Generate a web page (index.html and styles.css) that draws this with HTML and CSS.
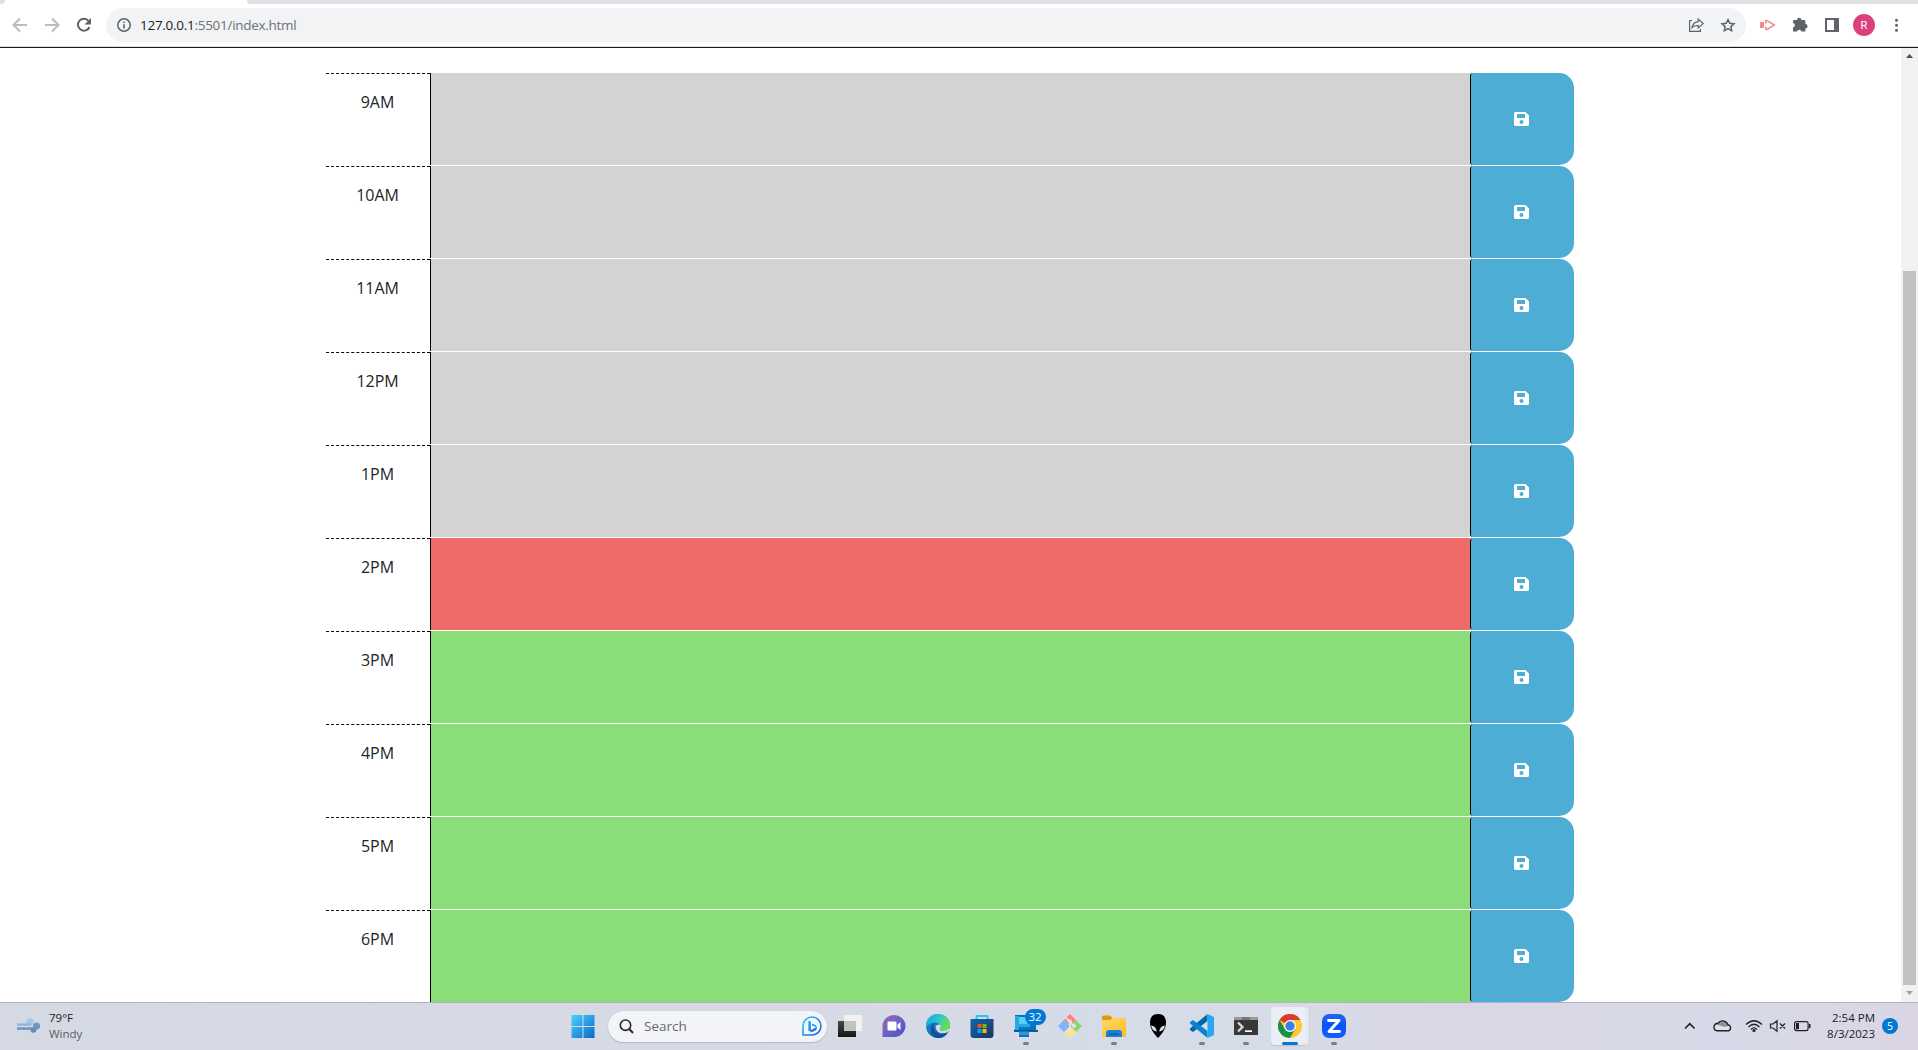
FILE: index.html
```html
<!DOCTYPE html>
<html lang="en">
<head>
<meta charset="utf-8">
<title>Work Day Scheduler</title>
<link rel="stylesheet" href="styles.css">
</head>
<body>
<svg width="0" height="0" class="defs" aria-hidden="true">
  <defs>
    <symbol id="save" viewBox="0 0 15 14"><path fill="#fff" fill-rule="evenodd" d="M1.5 0H11.5L15 3.5V12.5Q15 14 13.5 14H1.5Q0 14 0 12.5V1.500Q0 0 1.500 0ZM3 2V6H11V2ZM7.500 8A2 2 0 1 0 7.500 12A2 2 0 1 0 7.500 8Z"/></symbol>
    <linearGradient id="gWin" x1="0" y1="0" x2="1" y2="1"><stop offset="0" stop-color="#4fd0ff"/><stop offset="1" stop-color="#0669cb"/></linearGradient>
    <linearGradient id="gBing" x1="0" y1="0" x2="1" y2="1"><stop offset="0" stop-color="#2bc3f0"/><stop offset="1" stop-color="#2456d6"/></linearGradient>
    <linearGradient id="gDark" x1="0" y1="0" x2="0" y2="1"><stop offset="0" stop-color="#484846"/><stop offset="1" stop-color="#161616"/></linearGradient>
    <linearGradient id="gChat" x1="0" y1="0" x2="1" y2="1"><stop offset="0" stop-color="#a464ac"/><stop offset=".5" stop-color="#6b62c6"/><stop offset="1" stop-color="#4c50c8"/></linearGradient>
    <linearGradient id="gEdge" x1="0" y1="0" x2="1" y2=".5"><stop offset="0" stop-color="#159fd9"/><stop offset=".5" stop-color="#2cc3d1"/><stop offset="1" stop-color="#68e04f"/></linearGradient>
    <linearGradient id="gEdge2" x1="0" y1="0" x2="1" y2="1"><stop offset="0" stop-color="#1a96dc"/><stop offset="1" stop-color="#0c4f9c"/></linearGradient>
    <linearGradient id="gStore" x1="0" y1="0" x2="1" y2="1"><stop offset="0" stop-color="#0d68b4"/><stop offset="1" stop-color="#22325c"/></linearGradient>
    <linearGradient id="gFolder" x1="0" y1="0" x2="1" y2="1"><stop offset="0" stop-color="#ffda65"/><stop offset="1" stop-color="#fabb2b"/></linearGradient>
    <linearGradient id="gZoom" x1="0" y1="0" x2="0" y2="1"><stop offset="0" stop-color="#2366f2"/><stop offset=".5" stop-color="#0754ff"/><stop offset="1" stop-color="#1262fa"/></linearGradient>
    <linearGradient id="gWind" x1="0" y1="0" x2="0" y2="1"><stop offset="0" stop-color="#b5d1ef"/><stop offset="1" stop-color="#527fae"/></linearGradient>
  </defs>
</svg>
<header class="browser">
  <div class="tabstrip"><span class="tab-prev"></span><span class="tab-rest"></span></div>
  <div class="toolbar">
    <svg class="nav" viewBox="0 0 106 34" fill="none" stroke-width="2">
      <path stroke="#babcbe" d="M27 17H14M20 10.500 13.500 17 20 23.500M45 17H58M52 10.500 58.500 17 52 23.500"/>
      <path stroke="#5f6368" d="M88.700 13A6 6 0 1 0 89.500 19"/><path fill="#5f6368" d="M91 10V16.500H84.500Z"/>
    </svg>
    <div class="address">
      <svg class="info" viewBox="0 0 14 14"><circle cx="7" cy="7" r="6.200" fill="none" stroke="#5f6368" stroke-width="1.500"/><path fill="#5f6368" d="M6.200 6.200h1.600v4.300H6.200zM6.200 3.400h1.600V5H6.200z"/></svg>
      <p class="url"><b>127.0.0.1</b>:5501/index.html</p>
      <svg class="addr-actions" viewBox="0 0 58 20" fill="none" stroke="#5f6368" stroke-width="1.200">
        <path d="M4 5.500H1.600V16.400H12.400V14M4 12.500C5 8.500 7 7 10.200 6.700V4L15.200 8.600 10.200 13V10.500C7.500 10.400 5.500 11 4 12.500Z"/>
        <path stroke-width="1.500" d="M40 4.600 41.800 8.300 45.900 8.800 42.900 11.600 43.700 15.700 40 13.700 36.300 15.700 37.100 11.600 34.100 8.800 38.200 8.300Z"/>
      </svg>
    </div>
    <svg class="extensions" viewBox="0 0 172 34">
      <path fill="#f28b8b" d="M14 14h4v6h-4z"/><path fill="none" stroke="#f28b8b" stroke-width="1.600" d="M19.800 15.500V11.700L28.300 17 19.800 22.300V18.500" stroke-dasharray="3.500 1 19 1 4"/>
      <path fill="#5f6368" d="M48 12h3a2.200 2.200 0 0 1 4.400 0h3q1 0 1 1v3a2.200 2.200 0 0 1 0 4.400v3.100H55.500a2.300 2.300 0 0 0-4.500 0H47v-4a2.300 2.300 0 0 0 0-4.500V13q0-1 1-1Z"/>
      <path fill="#5f6368" fill-rule="evenodd" d="M79 10h14v14H79zM81 12v10h7V12z"/>
      <circle cx="118" cy="17" r="11" fill="#dc407d"/>
      <text x="118" y="21" text-anchor="middle" class="avatar-letter">R</text>
      <g fill="#5f6368"><circle cx="150.500" cy="12.300" r="1.500"/><circle cx="150.500" cy="17.300" r="1.500"/><circle cx="150.500" cy="22.300" r="1.500"/></g>
    </svg>
  </div>
</header>
<div class="viewport">
  <main class="schedule">
    <div class="time-block past"><div class="hour">9AM</div><div class="description"></div><button class="save"><svg><use href="#save"/></svg></button></div>
    <div class="time-block past"><div class="hour">10AM</div><div class="description"></div><button class="save"><svg><use href="#save"/></svg></button></div>
    <div class="time-block past"><div class="hour">11AM</div><div class="description"></div><button class="save"><svg><use href="#save"/></svg></button></div>
    <div class="time-block past"><div class="hour">12PM</div><div class="description"></div><button class="save"><svg><use href="#save"/></svg></button></div>
    <div class="time-block past"><div class="hour">1PM</div><div class="description"></div><button class="save"><svg><use href="#save"/></svg></button></div>
    <div class="time-block present"><div class="hour">2PM</div><div class="description"></div><button class="save"><svg><use href="#save"/></svg></button></div>
    <div class="time-block future"><div class="hour">3PM</div><div class="description"></div><button class="save"><svg><use href="#save"/></svg></button></div>
    <div class="time-block future"><div class="hour">4PM</div><div class="description"></div><button class="save"><svg><use href="#save"/></svg></button></div>
    <div class="time-block future"><div class="hour">5PM</div><div class="description"></div><button class="save"><svg><use href="#save"/></svg></button></div>
    <div class="time-block future"><div class="hour">6PM</div><div class="description"></div><button class="save"><svg><use href="#save"/></svg></button></div>
  </main>
  <div class="scrollbar">
    <svg viewBox="0 0 17 17"><path fill="#505050" d="M5 10 8.500 6 12 10Z"/></svg>
    <div class="thumb"></div>
    <svg viewBox="0 0 17 17"><path fill="#a3a3a3" d="M5 6H12L8.500 10Z"/></svg>
  </div>
</div>
<footer class="taskbar">
  <div class="weather">
    <svg viewBox="0 0 24 18"><path fill="url(#gWind)" d="M0 6.500H11V8.500H0ZM0 10.500H16V12.500H0Z"/><circle cx="13" cy="4.800" r="3.800" fill="#a9c8e8"/><circle cx="19.500" cy="9" r="3.500" fill="#7197bd"/><circle cx="16.500" cy="13" r="2.800" fill="#6089b4"/><path fill="#8fb2d6" d="M0 6.500H14V8.500H0Z"/><path fill="#6a93bf" d="M0 10.500H18V12.500H0Z"/></svg>
    <p><span>79°F</span><span class="muted">Windy</span></p>
  </div>
  <div class="apps">
    <div class="app"><svg viewBox="0 0 24 24"><path fill="url(#gWin)" d="M.5 1H11.500V12H.5zM12.500 1H23.500V12H12.500zM.5 13H11.500V24H.5zM12.500 13H23.500V24H12.500z"/></svg></div>
    <div class="search">
      <svg class="lens" viewBox="0 0 15 15" fill="none" stroke="#2a2a2c"><circle cx="6.500" cy="6.200" r="5.200" stroke-width="1.600"/><path stroke-width="2" d="M10.200 10 14 14"/></svg>
      <span>Search</span>
      <svg class="bing" viewBox="0 0 20 20"><path fill="#eef6ff" stroke="url(#gBing)" stroke-width="1.500" d="M1 19V10A9 9 0 1 1 10 19Z"/><path fill="url(#gBing)" d="M6.300 4.500 9 5.500V14L14.500 11 10 9.500V7.500L14 9.500Q16 12 13.500 14.500L9.500 16.200 6.300 14.500Z"/></svg>
    </div>
    <div class="app"><svg viewBox="0 0 24 24"><path fill="url(#gDark)" d="M0 7H18V23H0z"/><path fill="#f1f1f1" d="M6 1H24V17H6z"/><path fill="#c2c2c2" d="M6 7H18V17H6z"/></svg></div>
    <div class="app"><svg viewBox="0 0 24 24"><path fill="url(#gChat)" d="M.5 23V12A11.500 11 0 1 1 12 23Z"/><rect x="5.500" y="7.500" width="9" height="9" rx="1" fill="#fff"/><path fill="#fff" d="M15.500 10.500 18.500 8V16L15.500 13.500Z"/></svg></div>
    <div class="app"><svg viewBox="0 0 24 24"><circle cx="12" cy="12" r="12" fill="url(#gEdge2)"/><path fill="url(#gEdge)" d="M0 11C1 4 6 0 12 0C19 0 24 5 24 11C24 15 21 17 18 17C15 17 13 15.500 14.500 13.500C15.500 10 11 8 7.500 8.500C3.500 9 1 11 0 14Z"/><path fill="#0e5199" d="M8.500 9C5 16 11 21 16 20.500Q20 20 22 18Q18 25 11 24Q4 21 5 14Q6 10 8.500 9Z"/><path fill="#d6d9e4" d="M9.500 13C10 10 14.500 9.500 15 12C15 13 13.800 13.500 14 15C14.500 17.500 19 18 24 14V16L21.500 18.500Q11 21.500 9.500 13Z"/></svg></div>
    <div class="app"><svg viewBox="0 0 24 24"><path fill="none" stroke="#25c4f4" stroke-width="1.800" d="M6.500 6V2H17.500V6"/><path fill="url(#gStore)" d="M.5 5H23.500V21Q23.500 24 20.500 24H3.500Q.5 24 .5 21Z"/><path fill="#f25022" d="M7.500 10h4v4h-4z"/><path fill="#7fba00" d="M12.500 10h4v4h-4z"/><path fill="#00a4ef" d="M7.500 15h4v4h-4z"/><path fill="#ffb900" d="M12.500 15h4v4h-4z"/></svg></div>
    <div class="app running"><svg viewBox="0 0 24 24"><path fill="#0a73bd" d="M1 1H22V16H24V18H15V23H5V18H0V16L1 15Z"/><path fill="#25a9e4" d="M1 2H5V16H1zM5 5H16V13H5z"/><path fill="#56d0f4" d="M5 3H13V10H5z"/><path fill="#0c4f8b" d="M0 16H24V17.500H0z"/><path fill="#209ce0" d="M5 17.500H15V21H5z"/></svg><span class="badge">32</span></div>
    <div class="app"><svg viewBox="0 0 24 24"><path fill="#ff7f83" d="M12 0 18 6 12 12 6 6Z"/><path fill="#8ed66c" d="M18 6 24 12 18 18 12 12Z"/><path fill="#ffe384" d="M12 12 18 18 12 24 6 18Z"/><path fill="#80b3ff" d="M6 6 12 12 6 18 0 12Z"/><path fill="none" stroke="#e4e3e7" stroke-width="1.800" d="M8 4 16 12M12 8V17"/><g fill="#e4e3e7"><circle cx="12" cy="7.500" r="2"/><circle cx="16" cy="12" r="2"/><circle cx="12" cy="17" r="2"/></g></svg></div>
    <div class="app running"><svg viewBox="0 0 24 24"><path fill="#dc9a0b" d="M0 3Q0 1.500 1.500 1.500H8L10.500 4V8H0z"/><path fill="url(#gFolder)" d="M0 6H8L10.500 4H22.500Q24 4 24 5.500V23H0Z"/><path fill="#1783d0" d="M4 23V19Q4 16 7 16H17Q20 16 20 19V23Z"/><path fill="#0b5ba8" d="M7 19.500H17V21H7z"/></svg></div>
    <div class="app"><svg viewBox="0 0 24 24"><path fill="#000" d="M12 0C18 0 20 4 20 9C20 15 15 21 12 24C9 21 4 15 4 9C4 4 6 0 12 0Z"/><path fill="#dcdde8" d="M5 11.500Q10 12 10.800 17.500Q6 17 5 11.500ZM19 11.500Q14 12 13.200 17.500Q18 17 19 11.500Z"/></svg></div>
    <div class="app running"><svg viewBox="0 0 24 24"><path fill="#0067ad" d="M17.500 0V7L3 18 0 16V14.500Z"/><path fill="#0d83cd" d="M3 6 17.500 17V24L0 9.500V8Z"/><path fill="#29a7f0" d="M17.500 0 24 3V21L17.500 24Z"/></svg></div>
    <div class="app running"><svg viewBox="0 0 24 24"><path fill="#999" d="M0 3H24V7H0z"/><path fill="#787878" d="M8 3h8v3H8z"/><path fill="#373737" d="M0 6H24V21H0z"/><path fill="none" stroke="#d5d5d5" stroke-width="2.400" d="M4 8.500 8.500 13 4 17.500"/><path fill="#fff" d="M11 16.300h7v1.700h-7z"/></svg></div>
    <div class="app running active"><svg viewBox="0 0 24 24"><circle cx="12" cy="12" r="12" fill="#fcc934"/><path fill="#db3b2f" d="M12 12 1.600 6A12 12 0 0 1 22.400 6H12Z"/><path fill="#179347" d="M1.600 6A12 12 0 0 0 12 24L17.200 15 12 12 6.800 15Z"/><circle cx="12" cy="12" r="5.900" fill="#fff"/><circle cx="12" cy="12" r="4.700" fill="#3780ee"/></svg></div>
    <div class="app running"><svg viewBox="0 0 24 24"><rect width="24" height="24" rx="7" fill="url(#gZoom)"/><path fill="none" stroke="#fff" stroke-width="2.900" stroke-linejoin="round" stroke-linecap="round" d="M6.500 6.500H17L7 17.500H17.500"/></svg></div>
  </div>
  <div class="tray">
    <svg class="tray-icons" viewBox="0 0 134 20" fill="none" stroke="#222226" stroke-width="1.200">
      <path stroke-width="1.700" d="M1 12.500 5.800 7.700 10.600 12.500"/>
      <path fill="#e3e3e6" stroke="none" d="M33 14.500H43A3 3 0 0 0 44 9.500L33 8Z"/><path fill="#929296" stroke="none" d="M31 9.500C34 7.500 38 12.500 44.500 10C43 4.500 37 3.500 34 7.500Z"/><path stroke-width="1.400" d="M33 14.800H43A3 3 0 0 0 44 8.800C42 4 36.500 3.700 34 7.300C29 7.500 28.500 14.500 33 14.800Z"/>
      <path d="M62 8.500Q70 1 78 8.500M64.500 11Q70 5.500 75.500 11M67 13.500Q70 10 73 13.500"/><circle cx="70" cy="14.500" r="1" fill="#222226"/>
      <path d="M86.500 8H89L93 4.700V15.300L89 12H86.500ZM96 7.500 101 12.500M101 7.500 96 12.500"/>
      <rect x="110.600" y="5.600" width="13.500" height="9" rx="2"/><path fill="#222226" stroke="none" d="M112 7h3v6.300h-3zM125 8h1.500v4H125z"/>
    </svg>
    <p class="clock"><span>2:54 PM</span><span>8/3/2023</span></p>
    <span class="notices">5</span>
  </div>
</footer>
</body>
</html>
```
FILE: styles.css
```css
* { box-sizing: border-box; }
body { margin: 0; height: 1050px; overflow: hidden; display: flex; flex-direction: column; background: #fff; font-family: "Open Sans", sans-serif; }
p { margin: 0; }
svg { display: block; flex: none; }
.defs { position: absolute; }

.browser { height: 48px; flex: none; border-bottom: 1px solid #1c1b20; box-shadow: inset 0 -1px #dadce0; }
.tabstrip { height: 4px; display: flex; justify-content: space-between; }
.tab-prev { width: 5px; background: #dee1e6; border-bottom-right-radius: 4px; }
.tab-rest { width: 1671px; background: #dee1e6; border-bottom-left-radius: 5px; }
.toolbar { height: 42px; padding: 4px 0; display: flex; }
.nav { width: 106px; height: 34px; }
.address { width: 1640px; height: 34px; border-radius: 17px; background: #f1f3f4; display: flex; align-items: center; padding-left: 11px; }
.info { width: 14px; height: 14px; }
.url { margin-left: 9px; font: 13.5px/20px "Open Sans", sans-serif; letter-spacing: -0.28px; color: #6d7176; white-space: nowrap; }
.url b { font-weight: 400; color: #202124; }
.addr-actions { width: 58px; height: 20px; margin-left: auto; }
.extensions { width: 172px; height: 34px; }
.avatar-letter { font: 11px Roboto, sans-serif; fill: #fff; }

.viewport { height: 954px; flex: none; display: flex; justify-content: space-between; }
.schedule { width: 1248px; margin: 25px 0 0 326px; display: flex; flex-direction: column; gap: 1px; }
.time-block { height: 92px; display: grid; grid-template-columns: 104px 1040px 104px; }
.hour { border-top: 1px dashed #000; padding: 16px 1px 0 0; text-align: center; font-size: 16px; line-height: 24px; letter-spacing: -0.1px; color: #212529; }
.description { border-left: 1px solid #000; }
.past .description { background: #d3d3d3; }
.present .description { background: #ee6b67; }
.future .description { background: #8bdd78; }
.save { border: 0; border-left: 1px solid #000; border-radius: 3px 15px 15px 3px; background: #4eadd5; padding: 0 2px 0 0; display: flex; align-items: center; justify-content: center; }
.save svg { width: 15px; height: 14px; }
.scrollbar { width: 17px; background: #f1f1f1; display: flex; flex-direction: column; }
.scrollbar svg { width: 17px; height: 17px; }
.thumb { width: 13px; height: 714px; margin: auto 2px 0; background: #c1c1c1; }

.taskbar { height: 48px; flex: none; border-top: 1px solid #b0b1ba; background: linear-gradient(90deg, #d5d9e4 0, #d6dae5 40%, #d5dce8 65%, #dad7e5 75%, #d7dae8 90%, #dbd5e4 100%); display: flex; }
.weather { width: 560.5px; display: flex; padding: 13px 0 0 17px; }
.weather svg { width: 24px; height: 18px; margin-top: 1px; }
.weather p { margin: -6px 0 0 8px; }
.weather span, .clock span { display: block; font-size: 11.5px; line-height: 16px; color: #1b1b1e; }
.weather .muted { color: #5d5f65; }
.apps { display: flex; align-items: center; padding-bottom: 1px; }
.app { position: relative; width: 44px; height: 46px; display: flex; align-items: center; justify-content: center; }
.app svg { width: 24px; height: 24px; z-index: 1; }
.app.running::after { content: ""; position: absolute; left: 19px; top: 39px; width: 6px; height: 3px; border-radius: 2px; background: #7b7d84; z-index: 1; }
.app.active::before { content: ""; position: absolute; left: 3px; top: 4px; width: 35px; height: 38px; border-radius: 4px; background: #eceef5; box-shadow: 3px 0 0 #e6e8ef, 4px 0 0 #cfd0da, 0 1px 1px #bfc0ca; }
.app.active::after { left: 14px; width: 16px; background: #0878d4; }
.app .badge { position: absolute; z-index: 2; left: 21px; top: 6px; width: 21px; height: 16px; border-radius: 8px; background: #0078d4; color: #fff; font-size: 11.5px; line-height: 16px; text-align: center; }
.search { width: 218.5px; height: 31px; margin: 0 1px 0 3.500px; border-radius: 16px; background: #f3f4f8; box-shadow: 0 1px 1px #b7b8c1, 0 0 1px #b7b8c1; display: flex; align-items: center; padding: 0 5px 0 11px; }
.search .lens { width: 15px; height: 15px; }
.search span { margin-left: 10px; font-size: 13.500px; color: #66676b; }
.search .bing { width: 20px; height: 20px; margin-left: auto; }
.tray { margin-left: auto; display: flex; padding: 13px 20px 0 0; }
.tray-icons { width: 134px; height: 20px; }
.clock { width: 56px; margin: -6px 7px 0 1px; text-align: right; white-space: nowrap; }
.notices { width: 16px; height: 16px; margin-top: 2px; border-radius: 50%; background: #0078d4; color: #fff; font-size: 10.500px; line-height: 16px; text-align: center; }
```
